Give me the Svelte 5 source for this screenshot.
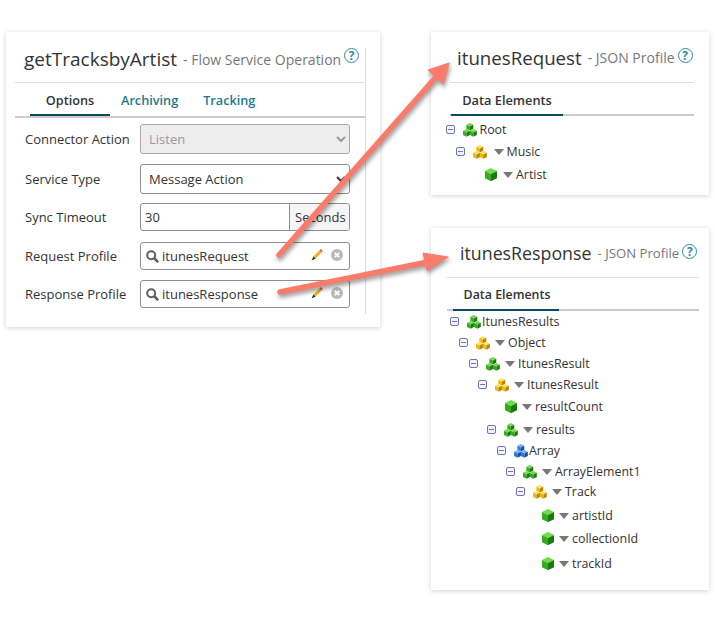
<script>
  const colors = {
    green: ['#6fdc4a', '#35ab1e', '#1a7a10'],
    yellow: ['#ffe25c', '#f2b90a', '#b58604'],
    blue: ['#74b2f5', '#2b78e0', '#194da3']
  };

  // x = left offset of the row, dy = distance from the row above
  const requestTree = [
    { x: 0, dy: 0, minus: true, color: 'green', label: 'Root' },
    { x: 10, dy: 22, minus: true, color: 'yellow', tri: true, label: 'Music' },
    { x: 39, dy: 23, leaf: true, tri: true, label: 'Artist' }
  ];

  const responseTree = [
    { x: 0, dy: 0, minus: true, color: 'green', label: 'ItunesResults' },
    { x: 9, dy: 21, minus: true, color: 'yellow', tri: true, label: 'Object' },
    { x: 19, dy: 21, minus: true, color: 'green', tri: true, label: 'ItunesResult' },
    { x: 28, dy: 21, minus: true, color: 'yellow', tri: true, label: 'ItunesResult' },
    { x: 55, dy: 22, leaf: true, tri: true, label: 'resultCount' },
    { x: 37, dy: 23, minus: true, color: 'green', tri: true, label: 'results' },
    { x: 47, dy: 21, minus: true, color: 'blue', label: 'Array' },
    { x: 56, dy: 21, minus: true, color: 'green', tri: true, label: 'ArrayElement1' },
    { x: 66, dy: 20, minus: true, color: 'yellow', tri: true, label: 'Track' },
    { x: 92, dy: 24, leaf: true, tri: true, label: 'artistId' },
    { x: 92, dy: 23, leaf: true, tri: true, label: 'collectionId' },
    { x: 92, dy: 25, leaf: true, tri: true, label: 'trackId' }
  ];
</script>

{#snippet cube(x, y, s, c)}
  <polygon points="{x},{y + s / 2} {x + s},{y} {x + 2 * s},{y + s / 2} {x + s},{y + s}" fill={c[0]} />
  <polygon points="{x},{y + s / 2} {x + s},{y + s} {x + s},{y + 2.2 * s} {x},{y + 1.7 * s}" fill={c[1]} />
  <polygon points="{x + 2 * s},{y + s / 2} {x + s},{y + s} {x + s},{y + 2.2 * s} {x + 2 * s},{y + 1.7 * s}" fill={c[2]} />
{/snippet}

{#snippet helpIcon()}
  <span class="help">?</span>
{/snippet}

{#snippet treeRows(rows)}
  <div class="tree">
    {#each rows as row}
      <div class="tree-row" style="padding-left: {row.x}px; margin-top: {row.dy ? row.dy - 21 : 0}px">
        {#if row.leaf}
          <svg class="leaf" width="12" height="13" viewBox="0 0 12 13">
            {@render cube(0, 0, 6, colors.green)}
          </svg>
        {:else}
          <span class="minus"></span>
          <svg class="cubes" width="14" height="14" viewBox="0 0 15 15">
            {@render cube(3.6, 0, 3.7, colors[row.color])}
            {@render cube(0, 6.5, 3.7, colors[row.color])}
            {@render cube(7.4, 6.5, 3.7, colors[row.color])}
          </svg>
        {/if}
        {#if row.tri}<span class="tri"></span>{/if}
        <span class="tree-label">{row.label}</span>
      </div>
    {/each}
  </div>
{/snippet}

{#snippet profileField(name)}
  <div class="field lookup">
    <svg width="13" height="13" viewBox="0 0 13 13" fill="none" stroke="#5f5f5f">
      <circle cx="5.2" cy="5.2" r="4" stroke-width="2" />
      <path d="M8 8l4.2 4.2" stroke-width="2.6" />
    </svg>
    <span class="lookup-name">{name}</span>
    <svg class="pencil" width="12" height="12" viewBox="0 0 12 12">
      <path d="M2.4 7.4L8.4 1.4l2.2 2.2-6 6z" fill="#f2b31c" />
      <path d="M8.4 1.4l.8-.8c.4-.4.9-.4 1.3 0l.9.9c.4.4.4.9 0 1.3l-.8.8z" fill="#e8605a" />
      <path d="M2.4 7.4l2.2 2.2L0.6 11.4z" fill="#262626" />
    </svg>
    <svg class="clear" width="12" height="12" viewBox="0 0 12 12">
      <circle cx="6" cy="6" r="6" fill="#b9b9b9" />
      <path d="M3.8 3.8l4.4 4.4M8.2 3.8l-4.4 4.4" stroke="#fff" stroke-width="1.8" />
    </svg>
  </div>
{/snippet}

<div class="page">
  <section class="panel flow-panel">
    <div class="inner">
      <h1 class="title"><span class="name">getTracksbyArtist</span> <span class="kind">- Flow Service Operation</span>{@render helpIcon()}</h1>
      <div class="tabs">
        <span class="tab active">Options</span>
        <span class="tab">Archiving</span>
        <span class="tab">Tracking</span>
      </div>
      <div class="form">
        <div class="form-row tall">
          <span class="form-label">Connector Action</span>
          <select class="field" disabled><option>Listen</option></select>
        </div>
        <div class="form-row tall">
          <span class="form-label">Service Type</span>
          <select class="field"><option>Message Action</option></select>
        </div>
        <div class="form-row timeout-row">
          <span class="form-label">Sync Timeout</span>
          <div class="field timeout">
            <input value="30" />
            <span class="unit">Seconds</span>
          </div>
        </div>
        <div class="form-row">
          <span class="form-label">Request Profile</span>
          {@render profileField('itunesRequest')}
        </div>
        <div class="form-row">
          <span class="form-label">Response Profile</span>
          {@render profileField('itunesResponse')}
        </div>
      </div>
    </div>
  </section>

  <div class="right-col">
    <section class="panel request-panel">
      <h1 class="title"><span class="name">itunesRequest</span> <span class="kind">- JSON Profile</span>{@render helpIcon()}</h1>
      <div class="tabs"><span class="tab active">Data Elements</span></div>
      {@render treeRows(requestTree)}
    </section>

    <section class="panel response-panel">
      <h1 class="title"><span class="name">itunesResponse</span> <span class="kind">- JSON Profile</span>{@render helpIcon()}</h1>
      <div class="tabs"><span class="tab active">Data Elements</span></div>
      {@render treeRows(responseTree)}
    </section>
  </div>

  <!-- callout arrows drawn over the panels -->
  <svg class="arrows" width="715" height="622" viewBox="0 0 715 622">
    <g fill="#fb7b6b" stroke="#fb7b6b" stroke-linecap="round">
      <path d="M279 255L436 77" stroke-width="5.5" fill="none" />
      <polygon points="449,63 428,70 443,84" stroke-width="1" />
      <path d="M280 292L428 262" stroke-width="5.5" fill="none" />
      <polygon points="448,257 423,253 427,270" stroke-width="1" />
    </g>
  </svg>
</div>

<style>
  :global(body) {
    margin: 0;
    background: #fff;
  }

  .page {
    position: relative;
    width: 715px;
    height: 622px;
    box-sizing: border-box;
    display: flex;
    align-items: flex-start;
    gap: 51px;
    padding: 32px 6px 0;
    font-family: 'Open Sans', 'Liberation Sans', sans-serif;
    font-size: 13px;
    color: #333;
  }

  .panel {
    background: #fff;
    box-sizing: border-box;
    box-shadow: 0 1px 5px rgba(0, 0, 0, 0.18);
  }

  .flow-panel {
    width: 374px;
    height: 295px;
    padding: 16px 14px 0 9px;
  }

  .inner {
    height: 266px;
    border-right: 1px solid #ddd;
  }

  .right-col {
    display: flex;
    flex-direction: column;
    gap: 33px;
    width: 278px;
  }

  .request-panel {
    height: 163px;
    padding: 0 15px 0 19px;
  }

  .response-panel {
    height: 362px;
    padding: 0 10px 0 16px;
  }

  .title {
    margin: 0;
    display: flex;
    align-items: flex-start;
    height: 35px;
    box-sizing: border-box;
    padding-left: 9px;
    border-bottom: 1px solid #ddd;
    font-weight: 400;
    white-space: nowrap;
  }

  .flow-panel .title {
    margin-right: 1px;
  }

  .request-panel .title {
    height: 51px;
    padding: 14px 0 0 7px;
  }

  .response-panel .title {
    height: 50px;
    padding: 14px 0 0 13px;
  }

  .name {
    font-size: 19px;
    line-height: 23px;
    color: #333;
    margin-right: 6px;
  }

  .request-panel .name {
    font-size: 18.7px;
  }

  .response-panel .name {
    font-size: 17.8px;
  }

  .kind {
    font-size: 14px;
    line-height: 23px;
    color: #777;
  }

  .response-panel .kind {
    font-size: 13.2px;
  }

  .help {
    flex: none;
    width: 13px;
    height: 13px;
    margin: 0 0 0 3px;
    border: 1.5px solid #2d8c9c;
    border-radius: 50%;
    font-size: 12px;
    font-weight: 700;
    line-height: 13px;
    text-align: center;
    color: #2d8c9c;
  }

  .request-panel .help,
  .response-panel .help {
    margin-top: 2px;
  }

  .tabs {
    display: flex;
    height: 35px;
    box-sizing: border-box;
    padding-left: 15px;
    border-bottom: 2px solid #ccc;
  }

  .request-panel .tabs,
  .response-panel .tabs {
    padding-left: 1px;
    height: 33px;
  }

  .response-panel .tabs {
    padding-left: 6px;
  }

  .tab {
    padding: 8px 11px 0;
    height: 33px;
    box-sizing: border-box;
    font-size: 12.7px;
    font-weight: 600;
    color: #1d7a8a;
    margin-right: 3px;
  }

  .tab.active {
    width: 80px;
    text-align: center;
    padding-left: 0;
    padding-right: 0;
    color: #333;
    border-bottom: 2px solid #0b4a63;
    margin-right: 0;
  }

  .request-panel .tab.active {
    width: 112px;
    font-size: 12.8px;
  }

  .response-panel .tab.active {
    width: 106px;
    font-size: 12.4px;
    padding-top: 7.5px;
    padding-left: 2px;
  }

  .form {
    display: flex;
    flex-direction: column;
    gap: 10px;
    padding: 6px 0 0 10px;
  }

  .form-row {
    display: flex;
    align-items: center;
    height: 28px;
  }

  .form-row.tall {
    height: 30px;
  }

  .timeout-row {
    margin: -1px 0 1px;
  }

  .form-label {
    width: 115px;
    flex: none;
  }

  .field {
    width: 210px;
    height: 100%;
    box-sizing: border-box;
    border: 1px solid #8f8f8f;
    border-radius: 3px;
    font: inherit;
    color: #333;
    background: #fff;
  }

  select.field {
    padding-left: 4px;
  }

  select.field:disabled {
    background: #ededed;
    border-color: #aaa;
    color: #999;
    opacity: 1;
  }

  .timeout {
    display: flex;
  }

  .timeout input {
    flex: 1;
    min-width: 0;
    border: 0;
    padding: 0 4px;
    background: none;
    font: inherit;
    color: #333;
  }

  .unit {
    width: 60px;
    box-sizing: border-box;
    padding-left: 5px;
    line-height: 26px;
    background: #f5f5f5;
    border-left: 1px solid #8f8f8f;
    border-radius: 0 2px 2px 0;
    white-space: nowrap;
  }

  .lookup {
    display: flex;
    align-items: center;
    padding: 0 6px 0 5px;
  }

  .lookup-name {
    flex: 1;
    margin-left: 3px;
  }

  .pencil {
    margin-right: 8px;
    margin-top: -2px;
  }

  .clear {
    margin-top: -2px;
  }

  .tree {
    display: flex;
    flex-direction: column;
  }

  .request-panel .tree {
    margin-left: -4px;
    padding-top: 3px;
  }

  .response-panel .tree {
    margin-left: 3px;
  }

  .tree-row {
    display: flex;
    align-items: center;
    height: 21px;
    white-space: nowrap;
    font-size: 12.4px;
  }

  .minus {
    width: 7px;
    height: 7px;
    margin-right: 8px;
    border: 1px solid #6f74b8;
    border-radius: 2px;
    background: linear-gradient(#6f74b8, #6f74b8) center / 5px 1px no-repeat #f4f4fb;
  }

  .cubes {
    margin-right: 1px;
  }

  .request-panel .cubes {
    margin-right: 2.5px;
  }

  .leaf {
    margin-right: 1px;
  }

  .request-panel .leaf {
    margin-right: 2px;
  }

  .tri {
    width: 0;
    height: 0;
    margin: 0 3px 0 4px;
    border-style: solid;
    border-width: 6px 5px 0;
    border-color: #777 transparent transparent;
  }

  .tree-label {
    color: #333;
  }

  .arrows {
    position: absolute;
    left: 0;
    top: 0;
    pointer-events: none;
    filter: drop-shadow(1px 3px 2px rgba(0, 0, 0, 0.4));
  }
</style>
